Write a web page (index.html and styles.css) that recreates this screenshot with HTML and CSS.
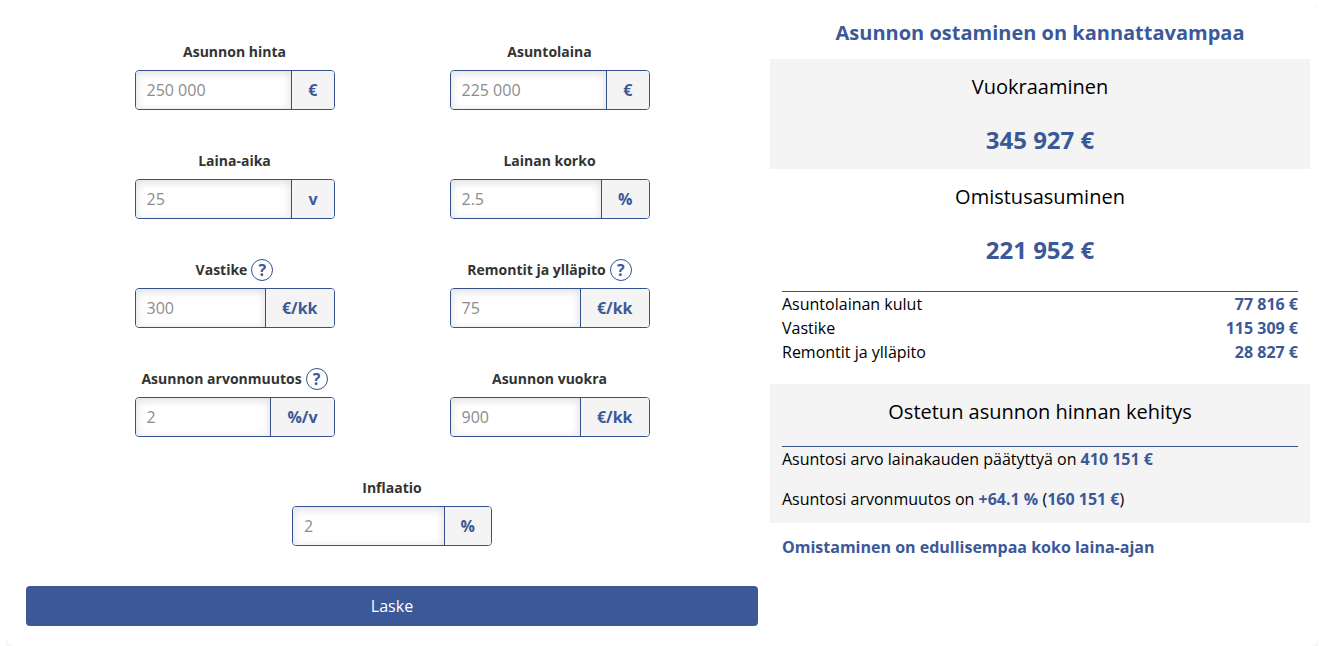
FILE: index.html
```html
<!DOCTYPE html>
<html lang="fi">
<head>
<meta charset="utf-8">
<meta name="viewport" content="width=device-width, initial-scale=1">
<title>Asuntolaskuri</title>
<link rel="stylesheet" href="styles.css">
</head>
<body>
<main class="card">
  <form class="calculator">
    <div class="fields">
      <div class="field">
        <div class="field-head"><label for="price">Asunnon hinta</label></div>
        <div class="input-group"><input id="price" type="text" placeholder="250 000"><span class="unit">€</span></div>
      </div>
      <div class="field">
        <div class="field-head"><label for="loan">Asuntolaina</label></div>
        <div class="input-group"><input id="loan" type="text" placeholder="225 000"><span class="unit">€</span></div>
      </div>
      <div class="field">
        <div class="field-head"><label for="term">Laina-aika</label></div>
        <div class="input-group"><input id="term" type="text" placeholder="25"><span class="unit">v</span></div>
      </div>
      <div class="field">
        <div class="field-head"><label for="rate">Lainan korko</label></div>
        <div class="input-group"><input id="rate" type="text" placeholder="2.5"><span class="unit">%</span></div>
      </div>
      <div class="field">
        <div class="field-head"><label for="charge">Vastike</label><button class="help" type="button">?</button></div>
        <div class="input-group"><input id="charge" type="text" placeholder="300"><span class="unit">€/kk</span></div>
      </div>
      <div class="field">
        <div class="field-head"><label for="upkeep">Remontit ja ylläpito</label><button class="help" type="button">?</button></div>
        <div class="input-group"><input id="upkeep" type="text" placeholder="75"><span class="unit">€/kk</span></div>
      </div>
      <div class="field">
        <div class="field-head"><label for="growth">Asunnon arvonmuutos</label><button class="help" type="button">?</button></div>
        <div class="input-group"><input id="growth" type="text" placeholder="2"><span class="unit">%/v</span></div>
      </div>
      <div class="field">
        <div class="field-head"><label for="rent">Asunnon vuokra</label></div>
        <div class="input-group"><input id="rent" type="text" placeholder="900"><span class="unit">€/kk</span></div>
      </div>
      <div class="field field-wide">
        <div class="field-head"><label for="inflation">Inflaatio</label></div>
        <div class="input-group"><input id="inflation" type="text" placeholder="2"><span class="unit">%</span></div>
      </div>
    </div>
    <button class="submit" type="submit">Laske</button>
  </form>

  <section class="results">
    <h2 class="verdict">Asunnon ostaminen on kannattavampaa</h2>
    <div class="panel panel-shaded">
      <h3 class="panel-title">Vuokraaminen</h3>
      <p class="total">345 927 €</p>
    </div>
    <div class="panel">
      <h3 class="panel-title">Omistusasuminen</h3>
      <p class="total">221 952 €</p>
    </div>
    <div class="breakdown">
      <table class="costs">
        <tbody>
          <tr><th scope="row">Asuntolainan kulut</th><td>77 816 €</td></tr>
          <tr><th scope="row">Vastike</th><td>115 309 €</td></tr>
          <tr><th scope="row">Remontit ja ylläpito</th><td>28 827 €</td></tr>
        </tbody>
      </table>
    </div>
    <div class="panel panel-shaded">
      <h3 class="panel-title">Ostetun asunnon hinnan kehitys</h3>
      <div class="growth">
        <p>Asuntosi arvo lainakauden päätyttyä on <strong>410 151 €</strong></p>
        <p>Asuntosi arvonmuutos on <strong>+64.1 %</strong> (<strong>160 151 €</strong>)</p>
      </div>
    </div>
    <p class="summary">Omistaminen on edullisempaa koko laina-ajan</p>
  </section>
</main>
</body>
</html>
```

FILE: styles.css
```css
:root {
  --blue: #3b5998;
  --line: #34508f;
  --shade: #f4f4f4;
}

* {
  box-sizing: border-box;
}

body {
  margin: 5px 7px 0 6px;
  background: #fff;
  color: #000;
  font: 16px/24px "Open Sans", "Noto Sans", sans-serif;
}

h2, h3, p {
  margin: 0;
}

.card {
  display: grid;
  grid-template-columns: 61fr 45fr;
  column-gap: 12px;
  padding: 14px 8px 20px 20px;
  border-radius: 8px;
  background: #fff;
  box-shadow: 0 4px 16px rgba(0, 0, 0, 0.1);
}

.calculator {
  display: flex;
  flex-direction: column;
  gap: 40px;
  padding-top: 21px;
}

.fields {
  display: grid;
  grid-template-columns: 1fr 1fr;
  row-gap: 39px;
  width: 100%;
  max-width: 630px;
  margin: 0 auto;
}

.field {
  display: flex;
  flex-direction: column;
  align-items: center;
  gap: 6px;
}

.field-wide {
  grid-column: 1 / -1;
}

.field-head {
  display: flex;
  align-items: center;
  justify-content: center;
  gap: 4px;
  height: 24px;
  color: #333;
  font-size: 14px;
  font-weight: 700;
}

.help {
  width: 22px;
  height: 22px;
  padding: 0;
  border: 1px solid var(--line);
  border-radius: 50%;
  background: #fff;
  color: var(--blue);
  font: 700 16px/20px "Open Sans", "Noto Sans", sans-serif;
}

.input-group {
  display: flex;
  width: 200px;
  height: 40px;
  overflow: hidden;
  border: 1px solid var(--line);
  border-radius: 4px;
}

.input-group input {
  flex: 1;
  min-width: 0;
  padding: 0 11px;
  border: 0;
  background: #fff;
  box-shadow: inset 0 2px 10px rgba(0, 0, 0, 0.14);
  color: #333;
  font: inherit;
}

.input-group input::placeholder {
  color: #8c8c8c;
  opacity: 1;
}

.unit {
  padding: 0 16px;
  border-left: 1px solid var(--line);
  background: var(--shade);
  color: var(--blue);
  font-weight: 700;
  line-height: 38px;
}

.submit {
  height: 40px;
  border: 0;
  border-radius: 4px;
  background: var(--blue);
  color: #fff;
  font: inherit;
}

.verdict {
  margin-bottom: 12px;
  color: var(--blue);
  font-size: 20px;
  line-height: 28px;
  text-align: center;
}

.panel {
  padding: 14px 12px 12px;
}

.panel-shaded {
  background: var(--shade);
}

.panel-title {
  font-size: 20px;
  font-weight: 400;
  line-height: 28px;
  text-align: center;
}

.total {
  margin: 23px 0 1px;
  color: var(--blue);
  font-size: 24px;
  font-weight: 700;
  line-height: 32px;
  text-align: center;
}

.breakdown {
  margin: 12px 12px 20px;
  border-top: 1px solid var(--line);
}

.costs {
  width: 100%;
  border-collapse: collapse;
}

.costs th {
  padding: 0;
  font-weight: 400;
  text-align: left;
}

.costs td {
  padding: 0;
  color: var(--blue);
  font-weight: 700;
  text-align: right;
}

.growth {
  display: flex;
  flex-direction: column;
  gap: 16px;
  margin-top: 20px;
  border-top: 1px solid var(--line);
}

.growth strong {
  color: var(--blue);
}

.summary {
  padding: 12px;
  color: var(--blue);
  font-weight: 700;
}
```
